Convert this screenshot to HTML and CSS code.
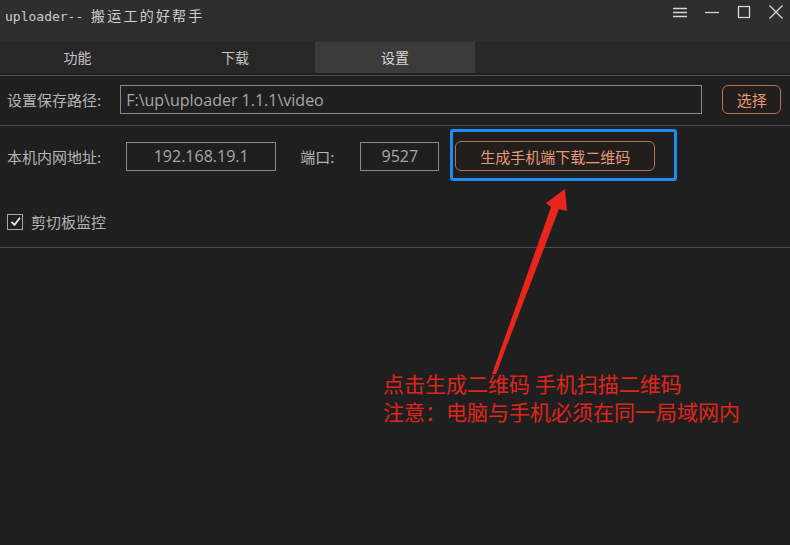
FILE: index.html
```html
<!DOCTYPE html>
<html lang="zh">
<head>
<meta charset="utf-8">
<title>uploader</title>
<link rel="stylesheet" href="styles.css">
</head>
<body>
<div class="app">
  <header class="titlebar">
    <div class="title"><span class="t-en">uploader-- </span><span class="t-zh">搬运工的好帮手</span></div>
    <div class="winctl">
      <svg class="ic" width="16" height="16" viewBox="0 0 16 16"><path d="M1 4.5h14M1 8.5h14M1 12.5h14" stroke="#d8d8d8" stroke-width="1.3" fill="none"/></svg>
      <svg class="ic" width="16" height="16" viewBox="0 0 16 16"><path d="M1 8.5h14" stroke="#d8d8d8" stroke-width="1.3" fill="none"/></svg>
      <svg class="ic" width="16" height="16" viewBox="0 0 16 16"><rect x="2.5" y="2.5" width="11" height="11" stroke="#d8d8d8" stroke-width="1.3" fill="none"/></svg>
      <svg class="ic" width="16" height="16" viewBox="0 0 16 16"><path d="M1.5 1.5l13 13M14.5 1.5l-13 13" stroke="#d8d8d8" stroke-width="1.3" fill="none"/></svg>
    </div>
  </header>

  <nav class="tabs">
    <div class="tab">功能</div>
    <div class="tab">下载</div>
    <div class="tab active">设置</div>
  </nav>
  <div class="sep"></div>

  <section class="row row-path">
    <label class="lbl">设置保存路径:</label>
    <div class="field path">F:\up\uploader 1.1.1\video</div>
    <button class="btn pick">选择</button>
  </section>

  <section class="block">
    <div class="row row-net">
      <label class="lbl">本机内网地址:</label>
      <div class="field ip">192.168.19.1</div>
      <label class="lbl port-lbl">端口:</label>
      <div class="field port">9527</div>
      <button class="btn qr">生成手机端下载二维码</button>
    </div>
    <div class="check-row">
      <span class="checkbox">
        <svg width="13" height="13" viewBox="0 0 13 13"><path d="M2.5 6.8l3 3 5.5-7" stroke="#e8e8e8" stroke-width="1.8" fill="none"/></svg>
      </span>
      <span class="check-lbl">剪切板监控</span>
    </div>
    <div class="highlight"></div>
  </section>

  <svg class="arrow" width="790" height="545" viewBox="0 0 790 545">
    <path d="M492 374 L551 207 L546 203 L565 189 L567 211 L559 209 L496 374 Z" fill="#e8261c"/>
  </svg>
  <div class="note">
    <div>点击生成二维码 手机扫描二维码</div>
    <div>注意：电脑与手机必须在同一局域网内</div>
  </div>
</div>
</body>
</html>
```

FILE: styles.css
```css
* { box-sizing: border-box; }
html, body { margin: 0; padding: 0; }
body {
  background: #1e1e1e;
  font-family: "Noto Sans CJK SC", "Noto Sans", sans-serif;
  color: #b8b8b8;
}
.app {
  position: relative;
  width: 790px;
  height: 545px;
  overflow: hidden;
  background: #1f1f1f;
}
.titlebar {
  height: 42px;
  background: #2e2e2e;
  display: flex;
  justify-content: space-between;
  align-items: flex-start;
  padding: 4px 6px 0 5px;
}
.title {
  color: #cfcfcf;
  line-height: 20px;
  white-space: nowrap;
}
.t-en {
  font-family: "DejaVu Sans Mono", "Noto Sans CJK SC", monospace;
  font-size: 13px;
}
.t-zh {
  font-family: "Noto Sans CJK SC", sans-serif;
  font-size: 14px;
  letter-spacing: 2.2px;
}
.winctl {
  display: flex;
  gap: 16px;
}
.ic { display: block; }

.tabs {
  display: flex;
  height: 31px;
  background: #272727;
}
.tab {
  width: 160px;
  display: flex;
  align-items: center;
  justify-content: center;
  font-size: 14px;
  color: #c4c4c4;
  padding-bottom: 2px;
}
.tab:first-child { width: 155px; }
.tab.active { background: #3b3b3b; color: #d8d8d8; }
.sep {
  margin-top: 2px;
  border-top: 1px solid #4e4e4e;
}

.row {
  display: flex;
  align-items: center;
}
.row-path {
  padding: 9px 8px 11px 7px;
  border-bottom: 1px solid #4c4c4c;
}
.lbl {
  font-size: 15px;
  color: #b4b4b4;
  white-space: nowrap;
}
.field {
  height: 29px;
  border: 1px solid #8a8a8a;
  display: flex;
  align-items: center;
  font-family: "Open Sans", "Liberation Sans", sans-serif;
  font-size: 16px;
  color: #a8a8a8;
  background: #1f1f1f;
}
.path {
  margin-left: 19px;
  width: 582px;
  padding-left: 5px;
}
.btn {
  font-family: "Noto Sans CJK SC", sans-serif;
  background: #221e1c;
  border: 1px solid #b87458;
  color: #e89878;
  border-radius: 6px;
  padding: 0;
}
.pick {
  margin-left: 20px;
  width: 59px;
  height: 29px;
  font-size: 15px;
}

.block {
  position: relative;
  padding: 15px 0 0 7px;
  height: 122px;
  border-bottom: 1px solid #4c4c4c;
}
.ip {
  margin-left: 25px;
  width: 150px;
  justify-content: center;
}
.port-lbl { margin-left: 24px; }
.port {
  margin-left: 26px;
  width: 79px;
  justify-content: center;
}
.qr {
  margin-left: 16px;
  width: 200px;
  height: 30px;
  font-size: 15px;
}
.highlight {
  position: absolute;
  left: 450px;
  top: 3px;
  width: 227px;
  height: 52px;
  border: 3px solid #1c8cee;
  border-radius: 3px;
}
.check-row {
  display: flex;
  align-items: center;
  margin-top: 40px;
  gap: 8px;
}
.checkbox {
  width: 16px;
  height: 16px;
  border: 1px solid #a8a8a8;
  display: flex;
  align-items: center;
  justify-content: center;
}
.checkbox svg { display: block; }
.check-lbl { font-size: 15px; color: #b4b4b4; }

.arrow {
  position: absolute;
  left: 0;
  top: 0;
  pointer-events: none;
}
.note {
  position: absolute;
  left: 383px;
  top: 369px;
  font-size: 21px;
  line-height: 28px;
  color: #e0261c;
  white-space: nowrap;
}
```
